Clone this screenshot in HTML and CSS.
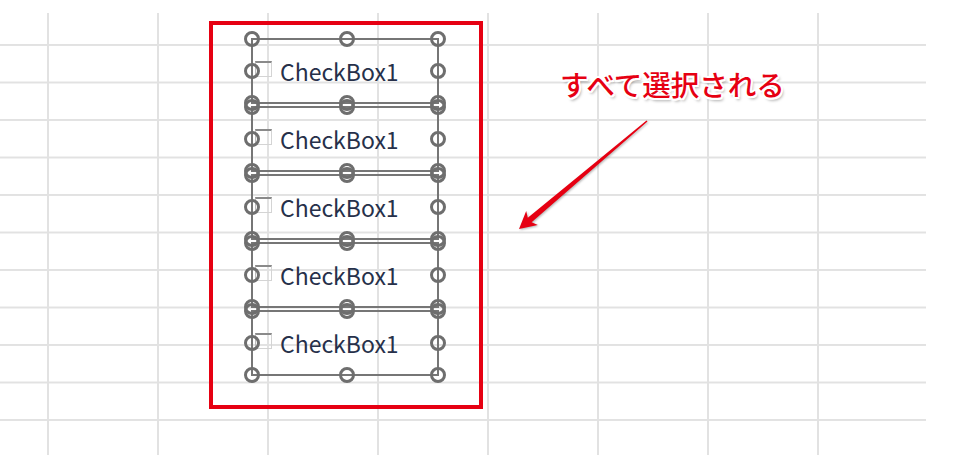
FILE: index.html
```html
<!DOCTYPE html>
<html lang="ja">
<head>
<meta charset="utf-8">
<title>CheckBox selection</title>
<link rel="stylesheet" href="styles.css">
</head>
<body>
<div class="stage">
  <div class="sheet"></div>

  <div class="highlight"></div>

  <div class="selection">
    <div class="frame">
      <span class="h tl"></span><span class="h tc"></span><span class="h tr"></span>
      <span class="h ml"></span><span class="h mr"></span>
      <span class="h bl"></span><span class="h bc"></span><span class="h br"></span>
      <div class="cb"><span class="box"></span><span class="label">CheckBox1</span></div>
    </div>
    <div class="frame">
      <span class="h tl"></span><span class="h tc"></span><span class="h tr"></span>
      <span class="h ml"></span><span class="h mr"></span>
      <span class="h bl"></span><span class="h bc"></span><span class="h br"></span>
      <div class="cb"><span class="box"></span><span class="label">CheckBox1</span></div>
    </div>
    <div class="frame">
      <span class="h tl"></span><span class="h tc"></span><span class="h tr"></span>
      <span class="h ml"></span><span class="h mr"></span>
      <span class="h bl"></span><span class="h bc"></span><span class="h br"></span>
      <div class="cb"><span class="box"></span><span class="label">CheckBox1</span></div>
    </div>
    <div class="frame">
      <span class="h tl"></span><span class="h tc"></span><span class="h tr"></span>
      <span class="h ml"></span><span class="h mr"></span>
      <span class="h bl"></span><span class="h bc"></span><span class="h br"></span>
      <div class="cb"><span class="box"></span><span class="label">CheckBox1</span></div>
    </div>
    <div class="frame">
      <span class="h tl"></span><span class="h tc"></span><span class="h tr"></span>
      <span class="h ml"></span><span class="h mr"></span>
      <span class="h bl"></span><span class="h bc"></span><span class="h br"></span>
      <div class="cb"><span class="box"></span><span class="label">CheckBox1</span></div>
    </div>
  </div>

  <div class="callout">すべて選択される</div>

  <svg class="arrow" width="145" height="125" viewBox="0 0 145 125">
    <polygon fill="#e60012" points="9,119 27.8,114.9 21.6,112.3 137.5,11.6 136.5,10.4 17.8,107.7 16.2,101.1"/>
  </svg>
</div>
</body>
</html>
```
FILE: styles.css
```css
html, body {
  margin: 0;
  padding: 0;
  background: #ffffff;
}
body {
  width: 967px;
  height: 455px;
  overflow: hidden;
  font-family: "Noto Sans CJK JP", "Noto Sans", sans-serif;
}
.stage {
  position: relative;
  box-sizing: border-box;
  width: 967px;
  height: 455px;
  padding-top: 13px;
}
.sheet {
  width: 926px;
  height: 442px;
  background-image:
    linear-gradient(to right, #e2e2e2 0, #e2e2e2 2px, transparent 2px),
    linear-gradient(to bottom, #e2e2e2 0, #e2e2e2 2px, transparent 2px);
  background-size: 110px 100%, 100% 37.5px;
  background-position: 47px 0, 0 31px;
  background-repeat: repeat, repeat;
}
.highlight {
  position: absolute;
  left: 209px;
  top: 21px;
  width: 274px;
  height: 388px;
  box-sizing: border-box;
  border: 4px solid #e60012;
}
.selection {
  position: absolute;
  left: 251px;
  top: 38px;
  width: 188px;
  display: flex;
  flex-direction: column;
  gap: 2px;
}
.frame {
  position: relative;
  box-sizing: border-box;
  height: 66px;
  border: 2px solid #767676;
  display: flex;
  align-items: center;
}
.h {
  position: absolute;
  width: 16px;
  height: 16px;
  box-sizing: border-box;
  border: 3px solid #6e6e6e;
  border-radius: 50%;
  transform: translate(-50%, -50%);
  z-index: 2;
}
.tl { left: -1px; top: -1px; }
.tc { left: 50%; top: -1px; margin-left: 2px; }
.tr { left: calc(100% + 1px); top: -1px; }
.ml { left: -1px; top: 50%; }
.mr { left: calc(100% + 1px); top: 50%; }
.bl { left: -1px; top: calc(100% + 1px); }
.bc { left: 50%; top: calc(100% + 1px); margin-left: 2px; }
.br { left: calc(100% + 1px); top: calc(100% + 1px); }
.cb {
  display: flex;
  align-items: center;
  padding-left: 2px;
  gap: 8px;
}
.box {
  width: 17px;
  height: 16px;
  box-sizing: border-box;
  border-top: 2px solid #8a8a8a;
  border-left: 1px solid #bdbdbd;
  border-right: 1px solid #d4d4d4;
  border-bottom: 1px solid #d4d4d4;
  margin-bottom: 4px;
}
.label {
  font-family: "Noto Sans CJK JP", "Noto Sans", sans-serif;
  font-size: 23px;
  font-weight: 400;
  line-height: 28px;
  color: #26304a;
  white-space: nowrap;
}
.callout {
  position: absolute;
  left: 560px;
  top: 66px;
  font-family: "Noto Sans CJK JP", sans-serif;
  font-size: 28.5px;
  font-weight: 500;
  line-height: 36px;
  color: #e60012;
  white-space: nowrap;
  text-shadow:
    -2px 0 0 #fff, 2px 0 0 #fff, 0 -2px 0 #fff, 0 2px 0 #fff,
    -1.5px -1.5px 0 #fff, 1.5px -1.5px 0 #fff, -1.5px 1.5px 0 #fff, 1.5px 1.5px 0 #fff,
    2px 3px 3px rgba(0, 0, 0, 0.35);
}
.arrow {
  position: absolute;
  left: 510px;
  top: 110px;
  overflow: visible;
  filter: drop-shadow(1.5px 1.5px 1px rgba(0, 0, 0, 0.3));
}
```
